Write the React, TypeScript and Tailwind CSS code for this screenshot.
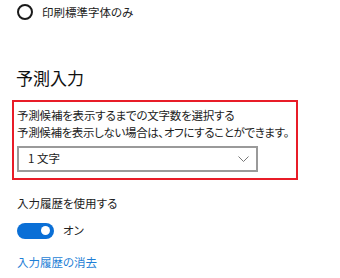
export default function App() {
  return (
    <div
      className="w-[340px] h-[278px] overflow-hidden bg-white text-black [font-feature-settings:'palt']"
      style={{ fontFamily: '"Noto Sans CJK JP", "Noto Sans", sans-serif' }}
    >
      {/* radio row */}
      <div className="flex items-center pl-[17px] pt-[4px] h-[16px] box-content">
        <span className="w-[16px] h-[16px] rounded-full border-2 border-[#1a1a1a] shrink-0" />
        <span className="ml-[9px] text-[11.5px] leading-[16px] text-[#222]">印刷標準字体のみ</span>
      </div>

      <h2 className="mt-[46px] pl-[16px] text-[17px] leading-[24px] text-[#111]">予測入力</h2>

      {/* highlighted block */}
      <div className="mt-[10px] ml-[12px] w-[286px] h-[80px] border-2 border-[#e81c28] pl-[3px] pt-[5px]">
        <p className="text-[11.5px] leading-[17px] tracking-[-0.2px] text-[#222] whitespace-nowrap">予測候補を表示するまでの文字数を選択する</p>
        <p className="text-[11.5px] leading-[17px] tracking-[-0.35px] text-[#222] whitespace-nowrap">予測候補を表示しない場合は、オフにすることができます。</p>
        <div className="mt-[5px] w-[241px] h-[26px] border-2 border-[#9a9a9a] flex items-center justify-between pl-[9px] pr-[7px]">
          <span className="text-[11.5px] text-[#222]">1 文字</span>
          <svg width="11" height="6" viewBox="0 0 11 6" fill="none">
            <path d="M0.5 0.5 L5.5 5.5 L10.5 0.5" stroke="#777" strokeWidth="1" />
          </svg>
        </div>
      </div>

      <p className="mt-[15px] pl-[17px] text-[11.5px] leading-[17px] text-[#222]">入力履歴を使用する</p>

      <div className="mt-[10px] pl-[17px] flex items-center">
        <div className="w-[37px] h-[16px] rounded-full bg-[#0a6fd6] flex items-center justify-end pr-[4px]">
          <span className="w-[9px] h-[9px] rounded-full bg-white" />
        </div>
        <span className="ml-[9px] text-[11.5px] leading-[17px] text-[#222]">オン</span>
      </div>

      <p className="mt-[15px] pl-[17px] text-[11.5px] leading-[17px] text-[#1f7fd6]">入力履歴の消去</p>
    </div>
  );
}
